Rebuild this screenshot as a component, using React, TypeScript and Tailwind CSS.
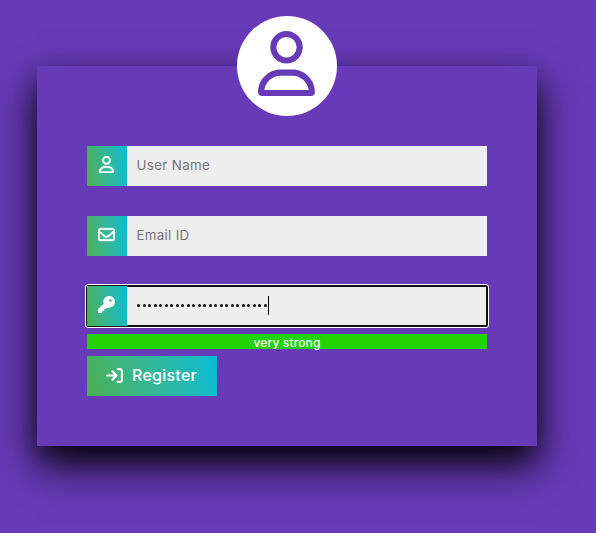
import type { ReactNode } from "react";
import { FaRegUser, FaRegEnvelope, FaKey, FaArrowRightToBracket } from "react-icons/fa6";

function Field({ icon, focused, children }: { icon: ReactNode; focused?: boolean; children: ReactNode }) {
  return (
    <div className="relative flex h-10 w-[400px] bg-[#eeeeee] text-[13.33px]">
      {focused && (
        <div className="absolute -inset-px rounded-[2px] border-2 border-[#101010] outline-1 outline-white" />
      )}
      <div className="relative flex h-10 w-10 justify-center bg-linear-82 from-[#4caf50] to-[#00bcd4] pt-[9.5px] pr-px text-[17px] text-white">
        {icon}
      </div>
      <div className="relative flex h-[39px] items-center pl-[9.5px]">{children}</div>
    </div>
  );
}

export default function App() {
  return (
    <main className="h-[533px] w-[596px] overflow-hidden bg-[#673ab7] pt-[66px] pl-[37px] font-['Inter',sans-serif]">
      <section className="relative flex h-[380px] w-[500px] flex-col bg-[#673ab7] px-[50px] pt-20 shadow-[0_19px_38px_rgba(0,0,0,0.95),0_10px_20px_rgba(0,0,0,0.25)]">
        <div className="absolute -top-[50px] left-[200px] flex size-[100px] justify-center rounded-full bg-white pt-[15px] pr-[2px] text-[65px] text-[#673ab7]">
          <FaRegUser />
        </div>
        <div className="flex flex-col gap-[30px]">
          <Field icon={<FaRegUser className="[stroke-width:14]" />}>
            <span className="tracking-[0.35px] text-[#757575]">User Name</span>
          </Field>
          <Field icon={<FaRegEnvelope className="[stroke-width:14]" />}>
            <span className="tracking-[0.3px] text-[#757575]">Email ID</span>
          </Field>
          <Field icon={<FaKey />} focused>
            <span className="flex h-5 w-[131.5px] items-center gap-[2.5px] pl-[0.5px]">
              {Array.from({ length: 24 }, (_, i) => (
                <i key={i} className="h-[3px] w-[3px] shrink-0 rounded-full bg-black" />
              ))}
            </span>
            <span className="h-[19px] w-px bg-black" />
          </Field>
        </div>
        <div className="mt-2 h-[15px] bg-[#22d300] text-center text-[12px] leading-[17px] font-medium tracking-[0.15px] text-white">
          very strong
        </div>
        <button className="mt-[7px] flex h-10 w-[130px] items-center bg-linear-75 from-[#4caf50] to-[#00bcd4] pb-[2px] pl-[19px] text-[16px] text-white">
          <FaArrowRightToBracket className="text-[17px]" />
          <span className="ml-[9px] font-medium tracking-[0.25px]">Register</span>
        </button>
      </section>
    </main>
  );
}
